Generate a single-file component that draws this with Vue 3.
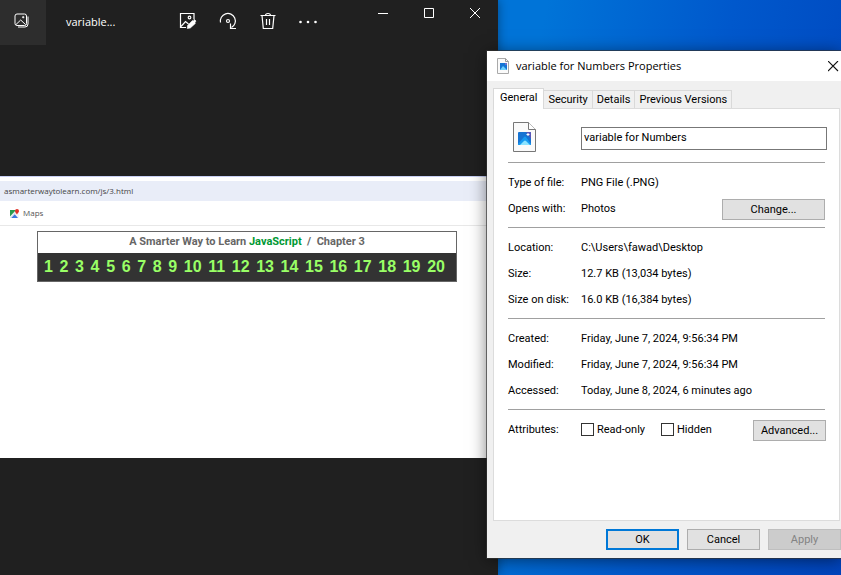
<script setup>
import { ref } from 'vue'

const fileName = ref('variable for Numbers')
const readOnly = ref(false)
const hidden = ref(false)
const tabs = ['General', 'Security', 'Details', 'Previous Versions']
const activeTab = ref('General')
const location = [
  ['Location:', 'C:\\Users\\fawad\\Desktop'],
  ['Size:', '12.7 KB (13,034 bytes)'],
  ['Size on disk:', '16.0 KB (16,384 bytes)'],
]
const dates = [
  ['Created:', 'Friday, June 7, 2024, 9:56:34 PM'],
  ['Modified:', 'Friday, June 7, 2024, 9:56:34 PM'],
  ['Accessed:', 'Today, June 8, 2024, 6 minutes ago'],
]
</script>

<template>
  <main class="desktop">
    <section class="photos" aria-label="Photos">
      <header class="toolbar">
        <button class="gallery" aria-label="All photos">
          <svg width="16" height="16" viewBox="0 0 16 16" fill="none" stroke="#fff">
            <rect x="1" y="1" width="11.500" height="11.500" rx="2" />
            <path d="M2 11.500 6.700 7l4.800 4.500M14 3.500V11a3 3 0 0 1-3 3H4" />
            <circle cx="9.200" cy="4.200" r=".8" fill="#fff" stroke-width=".6" />
          </svg>
        </button>
        <span class="name">variable...</span>
        <div class="tools">
          <button aria-label="Edit image">
            <svg width="18" height="18" viewBox="0 0 18 18" fill="none" stroke="#fff" stroke-width="1.200">
              <path d="M7 15.500H1.500v-14h13.500v6M2 14.500l4.500-5 3 2.500" />
              <circle cx="10.500" cy="5.500" r="1.300" />
              <path d="m8.500 13.500 5-5 1 .5 1-1.500 1.500 1.500-1 1.500.300 1-5 4.500-3 .500z" fill="#fff" stroke-width=".6" />
            </svg>
          </button>
          <button aria-label="Rotate">
            <svg width="18" height="18" viewBox="0 0 18 18" fill="none" stroke="#fff" stroke-width="1.200">
              <path d="M1.500 10.500A7.500 7.500 0 1 1 12.500 15.500M11.500 11.500v5H17" />
              <circle cx="9" cy="9" r="1.500" />
            </svg>
          </button>
          <button aria-label="Delete">
            <svg width="18" height="18" viewBox="0 0 18 18" fill="none" stroke="#fff" stroke-width="1.200">
              <path d="M1.500 3.500h15M6.500 3.500C6.500.8 11.500.8 11.500 3.500M3 3.500l1.300 13h9.400l1.300-13M7.500 7v6M10.500 7v6" />
            </svg>
          </button>
          <button aria-label="See more">
            <svg width="20" height="18" viewBox="0 0 20 18" fill="#fff">
              <circle cx="2.500" cy="10" r="1.300" /><circle cx="10" cy="10" r="1.300" /><circle cx="17.500" cy="10" r="1.300" />
            </svg>
          </button>
        </div>
        <div class="captions">
          <button aria-label="Minimize"><svg width="11" height="11" stroke="#fff"><path d="M0 5.500h10" /></svg></button>
          <button aria-label="Maximize"><svg width="11" height="11" fill="none" stroke="#fff"><path d="M.5.5h9v9h-9z" /></svg></button>
          <button aria-label="Close"><svg width="11" height="11" stroke="#fff"><path d="m0 0 10 10m0-10-10 10" /></svg></button>
        </div>
      </header>

      <article class="picture">
        <div class="address">asmarterwaytolearn.com/js/3.html</div>
        <div class="bookmarks">
          <svg width="9" height="9" viewBox="0 0 9 9">
            <path d="M0 1h9v8H0z" fill="#f4f6f8" />
            <path d="M0 1h6L0 7.500z" fill="#2a9b4f" />
            <path d="M4.500 5 8 9H1z" fill="#3c78e0" />
            <path d="M0 8 5 3l1 1-5 5H0z" fill="#dfe7ee" />
            <path d="M7 5.500C5 3 5 2.500 5 2a2 2 0 0 1 4 0c0 .8-.8 1.800-2 3.500z" fill="#e0342b" />
          </svg>
          <span>Maps</span>
        </div>
        <div class="chapter">
          <h1>A Smarter Way to Learn <b>JavaScript</b>&nbsp; /&nbsp; Chapter 3</h1>
          <nav aria-label="Exercises">
            <a v-for="n in 20" :key="n" href="#">{{ n }}</a>
          </nav>
        </div>
      </article>
    </section>

    <section class="dialog" role="dialog" aria-labelledby="dialog-title">
      <header class="titlebar">
        <svg width="12" height="16" viewBox="0 0 12 16">
          <path d="M.5.5h8l3 3v12H.5z" fill="#fafafa" stroke="#aaa" /><path d="M8.500.5v3h3" fill="none" stroke="#999" />
          <path d="M3 5h7v7H3z" fill="#1475d4" /><path d="m3 12 3-4 4 4z" fill="#6cd0fa" /><path d="M8 5h2v2H8z" fill="#6b6fd0" />
        </svg>
        <h2 id="dialog-title">variable for Numbers Properties</h2>
        <button aria-label="Close"><svg width="11" height="11" stroke="#111" stroke-width="1.100"><path d="m0 0 10 10m0-10-10 10" /></svg></button>
      </header>

      <div class="tabs" role="tablist">
        <button v-for="t in tabs" :key="t" role="tab" :aria-selected="t === activeTab" :class="{ active: t === activeTab }" @click="activeTab = t">{{ t }}</button>
      </div>

      <div class="panel" role="tabpanel">
        <div class="file">
          <svg width="24" height="31" viewBox="0 0 24 31">
            <path d="M.5.5h15l7 7v22H.5z" fill="#fafafa" stroke="#777" />
            <path d="M15.500.5v7h7" fill="#fff" stroke="#777" />
            <rect x="5" y="10" width="13" height="13" rx="1" fill="#1673d2" />
            <path d="M13 10h4a1 1 0 0 1 1 1v6z" fill="#5a55b8" />
            <path d="m5 22 6-7q1-1 2 0l5 7q0 1-1 1H6q-1 0-1-1z" fill="#169af0" />
            <path d="m7 23 4-4q1-1 2 0l4 4z" fill="#8be3ff" />
            <path d="M15 11v3M13.500 12.500h3" stroke="#fff" />
          </svg>
          <input v-model="fileName" type="text" aria-label="File name">
        </div>
        <dl class="group">
          <div><dt>Type of file:</dt><dd>PNG File (.PNG)</dd></div>
          <div><dt>Opens with:</dt><dd>Photos</dd><dd class="action"><button class="btn change">Change...</button></dd></div>
        </dl>
        <dl class="group">
          <div v-for="[k, v] in location" :key="k"><dt>{{ k }}</dt><dd>{{ v }}</dd></div>
        </dl>
        <dl class="group">
          <div v-for="[k, v] in dates" :key="k"><dt>{{ k }}</dt><dd>{{ v }}</dd></div>
        </dl>
        <div class="group attributes">
          <span class="caption">Attributes:</span>
          <label><input v-model="readOnly" type="checkbox">Read-only</label>
          <label><input v-model="hidden" type="checkbox">Hidden</label>
          <button class="btn">Advanced...</button>
        </div>
      </div>

      <footer>
        <button class="btn primary">OK</button>
        <button class="btn">Cancel</button>
        <button class="btn" disabled>Apply</button>
      </footer>
    </section>
  </main>
</template>

<style>
body { margin: 0; }
</style>

<style scoped>
* { box-sizing: border-box; }
h1, h2, dl, dd { margin: 0; font-weight: normal; }
button { padding: 0; border: 0; background: none; font: inherit; color: inherit; }
svg { display: block; flex: none; }

.desktop {
  position: relative;
  min-height: 100vh;
  overflow: hidden;
  background: linear-gradient(100deg, #0074d8 58%, #0058cc 78%, #0044bc 100%);
}

.photos {
  position: absolute;
  inset: 0 343px 0 0;
  background: #202020;
  color: #fff;
  box-shadow: 0 0 10px #0006;
  overflow: hidden;
}
.toolbar { display: flex; height: 45px; }
.gallery { display: grid; place-items: center; width: 46px; height: 45px; padding: 0 2px 4px 0; background: #2d2d2d; }
.name { width: 121px; padding-left: 20px; font: 11px/44px "Open Sans", "Noto Sans", sans-serif; }
.tools { display: flex; height: 42px; }
.tools button { display: grid; place-items: center; width: 40px; padding-left: 2px; }
.captions { display: flex; height: 26px; margin-left: auto; }
.captions button { display: grid; place-items: center; width: 46px; }

.picture { height: 282px; margin-top: 131px; padding-top: 4px; border-top: 1px solid #c8d0f4; background: #fff; }
.address { height: 20px; padding-left: 4px; background: #e9edf8; color: #444; font: 8px/20px "Open Sans", sans-serif; }
.bookmarks { display: flex; align-items: center; gap: 4px; height: 25px; padding-left: 10px; border-bottom: 1px solid #e8e8e8; color: #555; font: 8px/24px "Open Sans", sans-serif; }
.chapter { margin: 5px 41px 0 37px; border: 1px solid #666; background: #333; font-family: "Liberation Sans", Arial, sans-serif; }
.chapter h1 { height: 21px; background: #fff; color: #666; font: bold 11px/20px Roboto, Arial, sans-serif; text-align: center; }
.chapter h1 b { color: #093; font-weight: bold; }
.chapter nav { display: flex; justify-content: space-between; height: 28px; padding: 0 11px 0 6px; font-size: 16px; font-weight: bold; line-height: 28px; }
.chapter a { color: #9f6; text-decoration: none; }

.dialog {
  position: absolute;
  top: 51px;
  right: 0;
  width: 354px;
  padding-bottom: 8px;
  background: #f0f0f0;
  color: #000;
  box-shadow: 0 0 0 1px #333a, 0 2px 16px #0008;
  font: 11px/14px Roboto, Arial, sans-serif;
}
.titlebar { display: flex; align-items: center; gap: 7px; height: 30px; padding: 0 2px 0 10px; background: #fff; }
.titlebar h2 { flex: 1; font: 11px/30px "Open Sans", "Noto Sans", sans-serif; }
.tabs { display: flex; align-items: flex-end; height: 27px; padding: 0 6px; }
.tabs button { height: 18px; padding: 1px 4px 0; border: 1px solid #d9d9d9; border-width: 1px 1px 0 0; white-space: nowrap; }
.tabs .active { position: relative; height: 21px; margin-bottom: -1px; padding: 0 6px 2px; border-left-width: 1px; background: #fff; }
.panel { height: 413px; margin: 0 1px 0 6px; padding: 0 14px; border: 1px solid #dcdcdc; background: #fff; }
.file { display: flex; align-items: center; gap: 44px; height: 53px; padding: 3px 0 0 5px; }
.file input { flex: 1; min-width: 0; height: 23px; margin: 2px -2px 0 0; padding: 0 2px 1px; border: 1px solid #777; background: #fff; font: inherit; }
.group { padding: 7px 0 5px; border-top: 1px solid #a0a0a0; }
.group > div { display: flex; align-items: center; height: 26px; }
.group dt, .caption { flex: none; width: 73px; }
.group dd { white-space: nowrap; }
.action { margin-left: auto; }
.btn { width: 73px; height: 21px; padding-top: 1px; border: 1px solid #adadad; background: #e1e1e1; }
.change { display: block; width: 103px; }
.attributes { display: flex; align-items: center; height: 40px; padding: 0; }
.attributes label { display: flex; align-items: center; gap: 3px; width: 80px; }
.attributes input { appearance: none; width: 13px; height: 13px; margin: 0; border: 1px solid #333; background: #fff; }
.attributes .btn { margin: 2px -1px 0 auto; }
footer { display: flex; justify-content: flex-end; gap: 8px; padding-top: 8px; }
.primary { border: 2px solid #0078d7; }
.btn:disabled { border-color: #bfbfbf; background: #ccc; color: #838383; }
</style>
